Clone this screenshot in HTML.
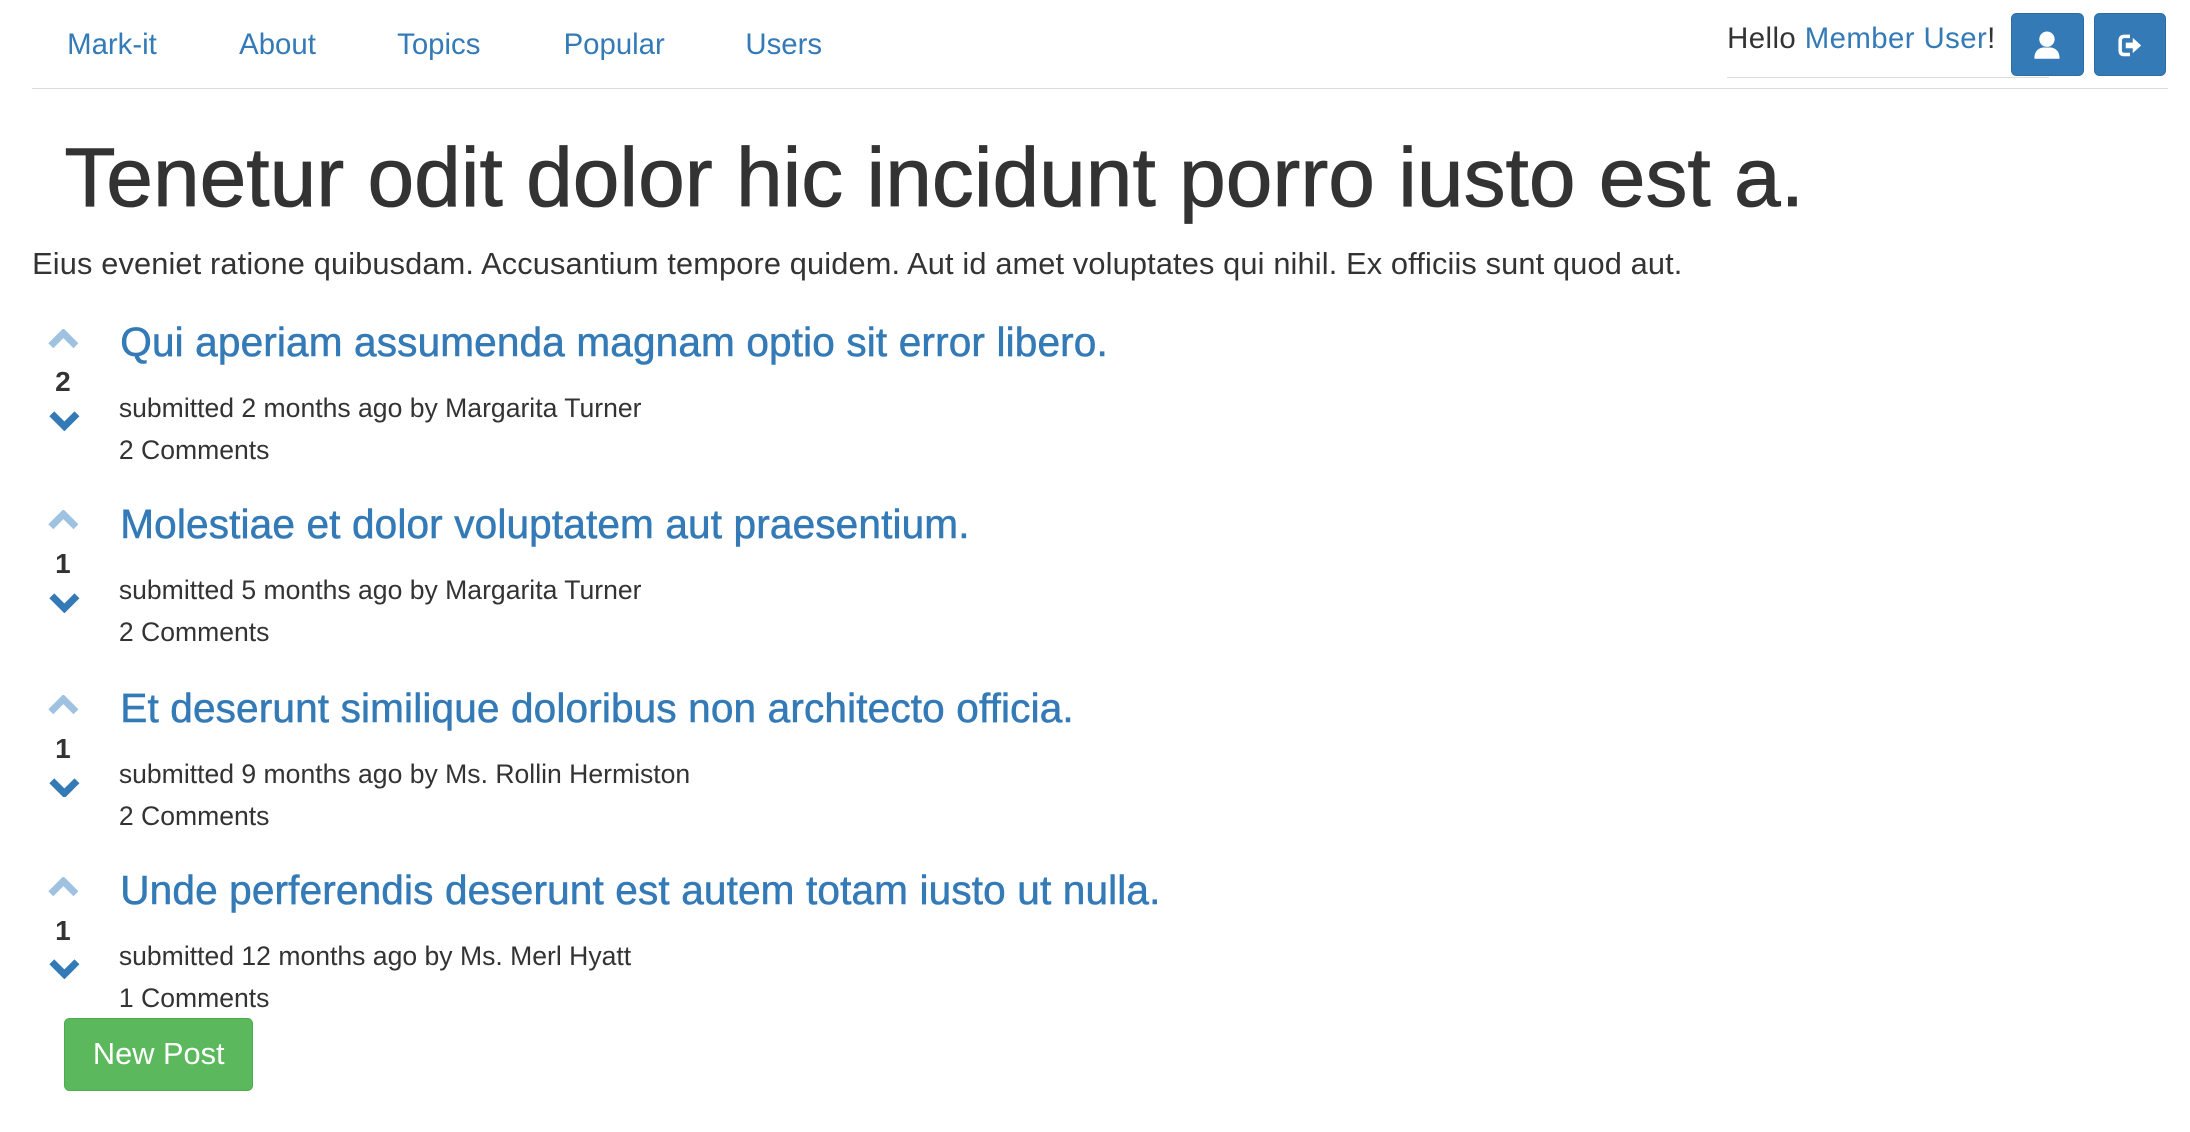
<!DOCTYPE html>
<html><head><meta charset="utf-8"><style>
html,body{margin:0;padding:0;background:#fff;}
body{width:1560px;height:806px;zoom:1.3985;position:relative;overflow:hidden;font-family:"Liberation Sans",Helvetica,Arial,sans-serif;color:#333;}
a{color:#337ab7;text-decoration:none;}
.abs{position:absolute;white-space:nowrap;}
.nav{font-size:21px;top:20px;}
.btn{position:absolute;top:9px;width:52px;height:45px;background:#337ab7;border-radius:4px;border:1px solid #2e6da4;box-sizing:border-box;}
h1{position:absolute;left:46px;top:92px;margin:0;font-size:60px;font-weight:normal;color:#333;white-space:nowrap;-webkit-text-stroke:0.6px #333;}
.t{font-size:29px;color:#337ab7;letter-spacing:0.1px;-webkit-text-stroke:0.4px #337ab7;}
.m{font-size:19px;color:#333;}
.n{font-size:20px;font-weight:bold;width:20px;text-align:center;}
</style></head><body>
<a class="abs nav" style="left:48px">Mark-it</a>
<a class="abs nav" style="left:171px">About</a>
<a class="abs nav" style="left:284px">Topics</a>
<a class="abs nav" style="left:403px">Popular</a>
<a class="abs nav" style="left:533px">Users</a>
<div class="abs" style="left:23px;top:63px;width:1527px;height:1px;background:#ddd"></div>
<div class="abs" style="left:1235px;top:16px;font-size:21px;letter-spacing:0.3px;">Hello <a>Member User</a>!</div>
<div class="abs" style="left:1235px;top:55px;width:230px;height:1px;background:#ddd"></div>
<div class="btn" style="left:1438px"><svg width="52" height="45" viewBox="0 0 52 45"><circle cx="25" cy="18" r="5.5" fill="#fff"/><path d="M16 32 Q16 25 22 24 L28 24 Q34 25 34 32 Z" fill="#fff"/></svg></div>
<div class="btn" style="left:1497px"><svg width="52" height="45" viewBox="0 0 52 45"><path d="M25 16 L21 16 Q18 16 18 19 L18 26 Q18 29 21 29 L25 29" stroke="#fff" stroke-width="2.5" fill="none"/><path d="M22 20.5 L27 20.5 L27 17 L33 22.5 L27 28 L27 24.5 L22 24.5 Z" fill="#fff"/></svg></div>
<h1>Tenetur odit dolor hic incidunt porro iusto est a.</h1>
<div class="abs" style="left:23px;top:176px;font-size:22px;letter-spacing:0.1px;">Eius eveniet ratione quibusdam. Accusantium tempore quidem. Aut id amet voluptates qui nihil. Ex officiis sunt quod aut.</div>

<div class="abs" style="left:0;top:0">
<svg class="abs" style="left:34px;top:235px" width="22" height="14" viewBox="0 0 22 14"><path d="M2 12 L11 3 L20 12" stroke="#9ec2e0" stroke-width="5" fill="none"/></svg>
<div class="abs n" style="left:35px;top:262px">2</div>
<svg class="abs" style="left:35px;top:294px" width="22" height="14" viewBox="0 0 22 14"><path d="M2 2 L11 11 L20 2" stroke="#337ab7" stroke-width="5" fill="none"/></svg>
<a class="abs t" style="left:86px;top:228px">Qui aperiam assumenda magnam optio sit error libero.</a>
<div class="abs m" style="left:85px;top:281px">submitted 2 months ago by Margarita Turner</div>
<div class="abs m" style="left:85px;top:311px">2 Comments</div>
</div>
<div class="abs" style="left:0;top:130px">
<svg class="abs" style="left:34px;top:235px" width="22" height="14" viewBox="0 0 22 14"><path d="M2 12 L11 3 L20 12" stroke="#9ec2e0" stroke-width="5" fill="none"/></svg>
<div class="abs n" style="left:35px;top:262px">1</div>
<svg class="abs" style="left:35px;top:294px" width="22" height="14" viewBox="0 0 22 14"><path d="M2 2 L11 11 L20 2" stroke="#337ab7" stroke-width="5" fill="none"/></svg>
<a class="abs t" style="left:86px;top:228px">Molestiae et dolor voluptatem aut praesentium.</a>
<div class="abs m" style="left:85px;top:281px">submitted 5 months ago by Margarita Turner</div>
<div class="abs m" style="left:85px;top:311px">2 Comments</div>
</div>
<div class="abs" style="left:0;top:262px">
<svg class="abs" style="left:34px;top:235px" width="22" height="14" viewBox="0 0 22 14"><path d="M2 12 L11 3 L20 12" stroke="#9ec2e0" stroke-width="5" fill="none"/></svg>
<div class="abs n" style="left:35px;top:262px">1</div>
<svg class="abs" style="left:35px;top:294px" width="22" height="14" viewBox="0 0 22 14"><path d="M2 2 L11 11 L20 2" stroke="#337ab7" stroke-width="5" fill="none"/></svg>
<a class="abs t" style="left:86px;top:228px">Et deserunt similique doloribus non architecto officia.</a>
<div class="abs m" style="left:85px;top:281px">submitted 9 months ago by Ms. Rollin Hermiston</div>
<div class="abs m" style="left:85px;top:311px">2 Comments</div>
</div>
<div class="abs" style="left:0;top:392px">
<svg class="abs" style="left:34px;top:235px" width="22" height="14" viewBox="0 0 22 14"><path d="M2 12 L11 3 L20 12" stroke="#9ec2e0" stroke-width="5" fill="none"/></svg>
<div class="abs n" style="left:35px;top:262px">1</div>
<svg class="abs" style="left:35px;top:294px" width="22" height="14" viewBox="0 0 22 14"><path d="M2 2 L11 11 L20 2" stroke="#337ab7" stroke-width="5" fill="none"/></svg>
<a class="abs t" style="left:86px;top:228px">Unde perferendis deserunt est autem totam iusto ut nulla.</a>
<div class="abs m" style="left:85px;top:281px">submitted 12 months ago by Ms. Merl Hyatt</div>
<div class="abs m" style="left:85px;top:311px">1 Comments</div>
</div>
<div class="abs" style="left:46px;top:728px;width:135px;height:52px;background:#5cb85c;border:1px solid #4cae4c;border-radius:4px;box-sizing:border-box;color:#fff;font-size:22px;text-align:center;line-height:50px;">New Post</div>
</body></html>
